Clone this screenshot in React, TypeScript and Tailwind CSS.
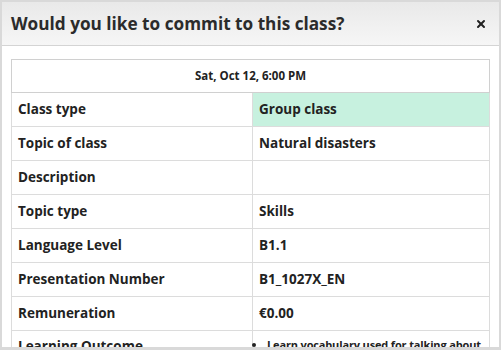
import { X } from 'lucide-react';

const rows: { label: string; value: string; highlight?: boolean }[] = [
    { label: 'Class type', value: 'Group class', highlight: true },
    { label: 'Topic of class', value: 'Natural disasters' },
    { label: 'Description', value: '' },
    { label: 'Topic type', value: 'Skills' },
    { label: 'Language Level', value: 'B1.1' },
    { label: 'Presentation Number', value: 'B1_1027X_EN' },
    { label: 'Remuneration', value: '€0.00' },
];

export default function App() {
    return (
        <main
            className="w-[501px] h-[350px] overflow-hidden bg-white border-x-2 border-t-2 border-[#d9d9d9] flex flex-col"
            style={{ fontFamily: '"Open Sans", sans-serif' }}
        >
            {/* Header */}
            <header className="h-[44px] shrink-0 flex items-center justify-between pl-[9px] pr-[12px] bg-gradient-to-b from-[#e9e9e9] to-[#f6f6f6] border-b border-[#d4d4d4]">
                <h2 className="text-[17.2px] font-bold text-[#2b2b2b]">
                    Would you like to commit to this class?
                </h2>
                <X size={12} strokeWidth={4} className="text-[#222]" />
            </header>

            <section className="flex-1 pt-[13px] px-[9px] min-h-0 overflow-hidden border-b-[3px] border-[#d9d9d9]">
                <table className="w-[479px] table-fixed border-collapse border border-[#dcdcdc] text-[13.5px] font-bold text-[#222]">
                    <colgroup>
                        <col className="w-[241px]" />
                        <col />
                    </colgroup>
                    <tbody>
                        <tr className="h-[33px]">
                            <td colSpan={2} className="border border-[#d0d0d0] text-center text-[11.5px] text-[#222]">
                                Sat, Oct 12, 6:00 PM
                            </td>
                        </tr>
                        {rows.map((r, i) => (
                            <tr key={i} className="h-[34px]">
                                <td className="border border-[#dcdcdc] px-[6px]">{r.label}</td>
                                <td className={`border border-[#dcdcdc] px-[6px] ${r.highlight ? 'bg-[#c7f1df]' : ''}`}>{r.value}</td>
                            </tr>
                        ))}
                        <tr>
                            <td className="border border-[#dcdcdc] px-[6px] align-top pt-[5px]">Learning Outcome</td>
                            <td className="border border-[#dcdcdc] pl-[6px] pr-0 align-top pt-[6px]">
                                <ul className="list-disc pl-[8px] text-[11px] tracking-[-0.15px]">
                                    <li>Learn vocabulary used for talking about natural disasters</li>
                                </ul>
                            </td>
                        </tr>
                    </tbody>
                </table>
            </section>
        </main>
    );
}
